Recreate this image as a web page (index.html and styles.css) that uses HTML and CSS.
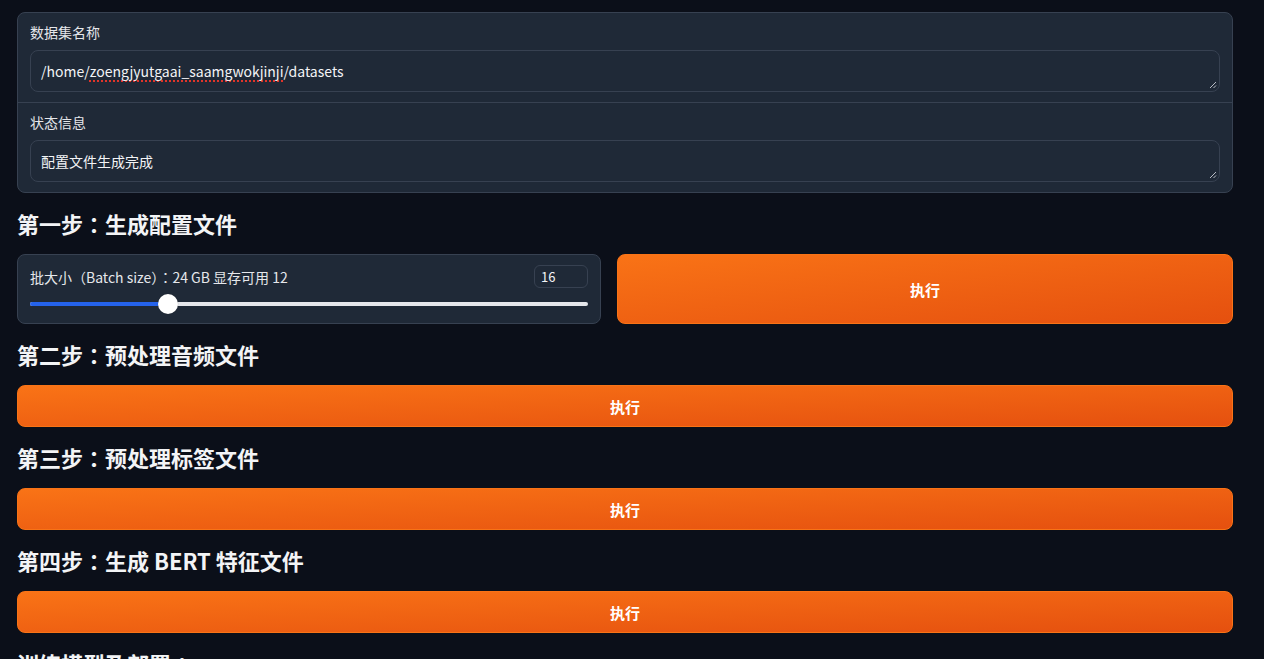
FILE: index.html
```html
<!DOCTYPE html>
<html lang="zh-CN">
<head>
<meta charset="utf-8">
<title>训练</title>
<link rel="stylesheet" href="styles.css">
</head>
<body>
<div class="page">
  <div class="block">
    <div class="field">
      <div class="label">数据集名称</div>
      <div class="textbox">/home/<span class="spell">zoengjyutgaai_saamgwokjinji</span>/datasets<svg class="grip" width="8" height="8" viewBox="0 0 8 8"><path d="M1 7L7 1M4.5 7L7 4.5" stroke="#b8bcc4" stroke-width="1"/></svg></div>
    </div>
    <div class="field">
      <div class="label">状态信息</div>
      <div class="textbox">配置文件生成完成<svg class="grip" width="8" height="8" viewBox="0 0 8 8"><path d="M1 7L7 1M4.5 7L7 4.5" stroke="#b8bcc4" stroke-width="1"/></svg></div>
    </div>
  </div>

  <h2 class="step">第一步<span class="punct" lang="zh-TW">：</span>生成配置文件</h2>
  <div class="row">
    <div class="block slider-block">
      <div class="slider-head">
        <span class="label">批大小（Batch size）<span class="punct" lang="zh-TW">：</span>24 GB 显存可用 12</span>
        <div class="num">16</div>
      </div>
      <div class="slider">
        <div class="track"><div class="fill" style="width: 24.7%"></div></div>
        <div class="thumb" style="left: 24.7%"></div>
      </div>
    </div>
    <button class="btn">执行</button>
  </div>

  <h2 class="step">第二步<span class="punct" lang="zh-TW">：</span>预处理音频文件</h2>
  <button class="btn">执行</button>

  <h2 class="step">第三步<span class="punct" lang="zh-TW">：</span>预处理标签文件</h2>
  <button class="btn">执行</button>

  <h2 class="step">第四步<span class="punct" lang="zh-TW">：</span>生成 BERT 特征文件</h2>
  <button class="btn">执行</button>

  <h2 class="step">训练模型及部署<span class="punct" lang="zh-TW">：</span></h2>
</div>
</body>
</html>
```

FILE: styles.css
```css
* { box-sizing: border-box; }
html, body {
  margin: 0;
  background: #0b0f19;
  font-family: "Noto Sans CJK SC", "Noto Sans", sans-serif;
  color: #e5e7eb;
  overflow: hidden;
}
.page {
  width: 1216px;
  margin-left: 17px;
  padding-top: 12px;
  display: flex;
  flex-direction: column;
  gap: 16px;
}
.block {
  background: #1f2937;
  border: 1px solid #374151;
  border-radius: 8px;
}
.field {
  padding: 9px 12px 10px;
  display: flex;
  flex-direction: column;
  gap: 8px;
}
.field + .field {
  border-top: 1px solid #374151;
}
.label {
  font-size: 14px;
  line-height: 20px;
  color: #e5e7eb;
}
.punct {
  font-family: "Noto Sans CJK TC", "Noto Sans CJK JP", sans-serif;
}
.textbox {
  position: relative;
  height: 42px;
  border: 1px solid #374151;
  border-radius: 8px;
  background: #1f2937;
  padding: 10px 10px;
  font-size: 14px;
  line-height: 20px;
  color: #f3f4f6;
}
.spell {
  text-decoration: underline dotted #e0342a;
  text-decoration-thickness: 1.5px;
  text-underline-offset: 3px;
}
.grip {
  position: absolute;
  right: 2px;
  bottom: 2px;
}
.step {
  margin: 0;
  font-size: 22px;
  line-height: 29px;
  font-weight: 700;
  color: #f3f4f6;
}
.row {
  display: grid;
  grid-template-columns: 584fr 616fr;
  gap: 16px;
}
.slider-block {
  padding: 10px 12px 9px;
}
.slider-head {
  display: flex;
  justify-content: space-between;
  align-items: center;
  height: 23px;
}
.num {
  width: 54px;
  height: 23px;
  border: 1px solid #374151;
  border-radius: 6px;
  font-size: 13px;
  line-height: 21px;
  padding-left: 6px;
  color: #f3f4f6;
}
.slider {
  position: relative;
  height: 20px;
  margin-top: 6px;
  display: flex;
  align-items: center;
}
.track {
  width: 100%;
  height: 4px;
  background: #e5e7eb;
  border-radius: 2px;
  overflow: hidden;
}
.fill {
  height: 100%;
  background: #2563eb;
}
.thumb {
  position: absolute;
  top: 0;
  width: 20px;
  height: 20px;
  margin-left: -10px;
  border-radius: 50%;
  background: #ffffff;
  box-shadow: 0 0 1px rgba(0,0,0,0.4);
}
.btn {
  display: block;
  width: 100%;
  min-height: 42px;
  border: 1px solid #f97316;
  border-radius: 8px;
  background: linear-gradient(to bottom right, #f97316, #e5500f);
  color: #ffffff;
  font-family: "Noto Sans CJK SC", "Noto Sans", sans-serif;
  font-size: 15px;
  font-weight: 700;
  padding: 0;
  cursor: pointer;
}
```
